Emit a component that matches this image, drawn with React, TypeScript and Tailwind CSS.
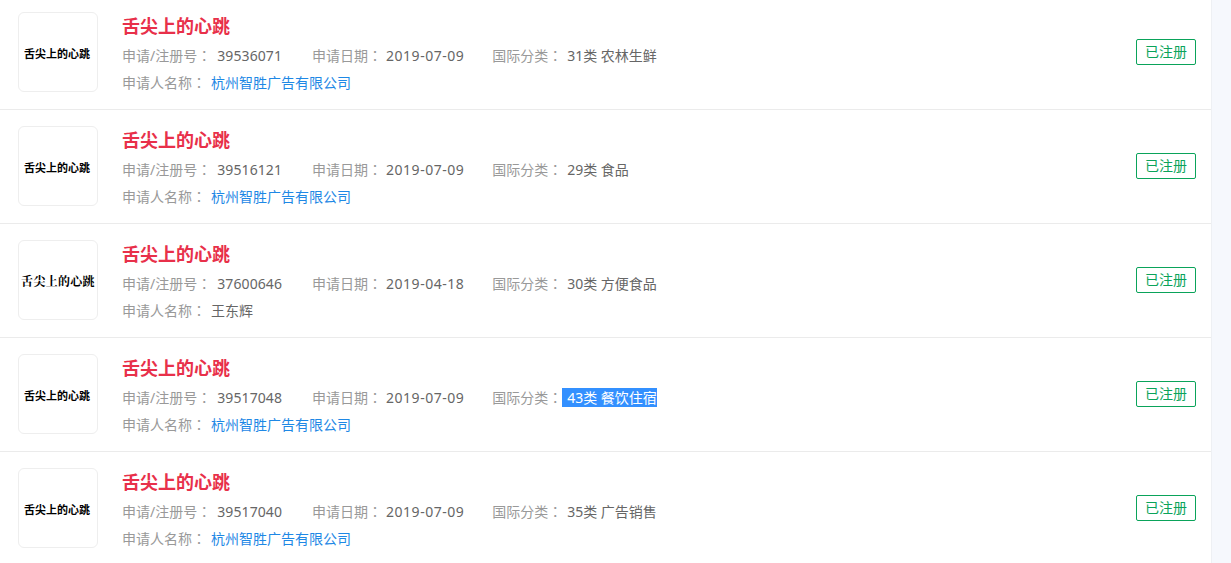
const ROWS = [
  { no: '39536071', date: '2019-07-09', cat: '31类 农林生鲜', owner: '杭州智胜广告有限公司', link: true },
  { no: '39516121', date: '2019-07-09', cat: '29类 食品', owner: '杭州智胜广告有限公司', link: true },
  { no: '37600646', date: '2019-04-18', cat: '30类 方便食品', owner: '王东辉', link: false, alt: true },
  { no: '39517048', date: '2019-07-09', cat: '43类 餐饮住宿', owner: '杭州智胜广告有限公司', link: true, selected: true },
  { no: '39517040', date: '2019-07-09', cat: '35类 广告销售', owner: '杭州智胜广告有限公司', link: true },
]

// TC face keeps the fullwidth colon centred, like the reference
function Label({ text }: { text: string }) {
  return (
    <span className="text-[#999999]">
      {text}
      <span className="font-['Noto_Sans_CJK_TC',sans-serif]">：</span>
    </span>
  )
}

export default function App() {
  return (
    <div className="h-[563px] overflow-hidden bg-[#f6f8fd] font-['Noto_Sans','Noto_Sans_CJK_SC',sans-serif]">
      <div className="w-[1212px] h-full bg-white border-r border-[#eef0f4]">
        {ROWS.map((r, i) => (
          <div
            key={r.no}
            className={`flex pl-[18px] pr-[15px] border-b border-[#ebebeb] ${i === 0 ? 'h-[110px] pt-3' : 'h-[114px] pt-4'}`}
          >
            <div className="w-20 h-20 shrink-0 rounded-md border border-[#eeeeee] flex items-center justify-center pt-1">
              {r.alt ? (
                <span className="text-[12px] font-bold text-black whitespace-nowrap tracking-[0.3px] font-['Liberation_Serif','Noto_Serif_CJK_SC',serif]">舌尖上的心跳</span>
              ) : (
                <span className="text-[11px] font-bold text-black whitespace-nowrap mr-[2px]">舌尖上的心跳</span>
              )}
            </div>
            <div className="flex-1 ml-6">
              <p className="text-[18px] leading-[28px] font-bold text-[#e8304a]">舌尖上的心跳</p>
              <div className="flex text-[14px] leading-[27px] mt-[2px] text-[#666666]">
                <p className="mr-[30px]">
                  <Label text="申请/注册号" />
                  <span className="ml-[6px] tracking-[0.1px]">{r.no}</span>
                </p>
                <p className="mr-[28px]">
                  <Label text="申请日期" />
                  <span className="ml-[4px] tracking-[0.5px]">{r.date}</span>
                </p>
                <p>
                  <Label text="国际分类" />
                  {r.selected ? (
                    <span className="bg-[#3390ff] text-white pl-[5px]">{r.cat}</span>
                  ) : (
                    <span className="pl-[5px]">{r.cat}</span>
                  )}
                </p>
              </div>
              <p className="text-[14px] leading-[27px]">
                <Label text="申请人名称" />
                <span className={`ml-[5px] ${r.link ? 'text-[#1e88e5]' : 'text-[#666666]'}`}>{r.owner}</span>
              </p>
            </div>
            <div className="mt-[27px] h-[26px] w-[60px] rounded-[2px] border border-[#0aa35a] text-[#0aa35a] text-[14px] leading-[24px] text-center shrink-0">
              已注册
            </div>
          </div>
        ))}
      </div>
    </div>
  )
}
